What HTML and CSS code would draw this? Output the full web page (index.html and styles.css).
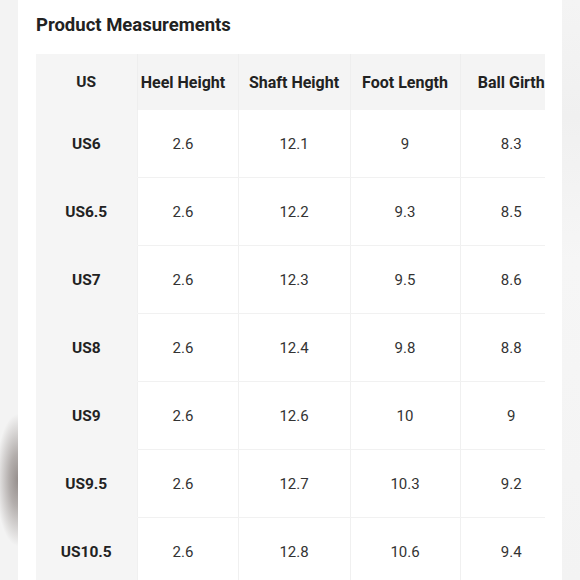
FILE: index.html
```html
<!DOCTYPE html>
<html lang="en">
<head>
<meta charset="utf-8">
<title>Product Measurements</title>
<link rel="stylesheet" href="styles.css">
</head>
<body>
<div class="page">
  <div class="strip strip-left"></div>
  <main class="main">
    <h2 class="title">Product Measurements</h2>
    <div class="table-wrap">
      <table class="sizes">
        <colgroup>
          <col class="c-us"><col class="c-heel"><col class="c-shaft"><col class="c-foot"><col class="c-ball">
        </colgroup>
        <thead>
          <tr><th class="first">US</th><th class="heel">Heel Height</th><th>Shaft Height</th><th>Foot Length</th><th>Ball Girth</th></tr>
        </thead>
        <tbody>
          <tr><th class="first">US6</th><td class="heel">2.6</td><td>12.1</td><td>9</td><td>8.3</td></tr>
          <tr><th class="first">US6.5</th><td class="heel">2.6</td><td>12.2</td><td>9.3</td><td>8.5</td></tr>
          <tr><th class="first">US7</th><td class="heel">2.6</td><td>12.3</td><td>9.5</td><td>8.6</td></tr>
          <tr><th class="first">US8</th><td class="heel">2.6</td><td>12.4</td><td>9.8</td><td>8.8</td></tr>
          <tr><th class="first">US9</th><td class="heel">2.6</td><td>12.6</td><td>10</td><td>9</td></tr>
          <tr><th class="first">US9.5</th><td class="heel">2.6</td><td>12.7</td><td>10.3</td><td>9.2</td></tr>
          <tr><th class="first">US10.5</th><td class="heel">2.6</td><td>12.8</td><td>10.6</td><td>9.4</td></tr>
        </tbody>
      </table>
    </div>
  </main>
  <div class="strip strip-right"></div>
</div>
</body>
</html>
```

FILE: styles.css
```css
html, body {
  margin: 0;
  padding: 0;
  background: #ffffff;
}

body {
  font-family: Roboto, "Liberation Sans", Arial, sans-serif;
  color: #222222;
  overflow: hidden;
}

.page {
  display: flex;
  width: 580px;
  height: 580px;
  overflow: hidden;
}

.strip {
  flex: 0 0 18px;
  height: 580px;
  background-color: #f3f3f3;
}

.strip-left {
  background-image:
    radial-gradient(ellipse 22px 66px at 18px 480px, rgba(150,143,141,1) 0%, rgba(168,162,160,0.85) 40%, rgba(243,243,243,0) 100%);
}

.strip-right {
  background-image: linear-gradient(to bottom, #f4f4f4 0%, #f0f0f0 20%, #f6f6f6 45%, #f3f3f3 100%);
}

.main {
  flex: 1 1 auto;
  padding: 0 17px 0 18px;
  min-width: 0;
}

.title {
  margin: 13px 0 17px;
  font-size: 18.5px;
  line-height: 24px;
  font-weight: 700;
  color: #222222;
}

.table-wrap {
  width: 509px;
  overflow: hidden;
}

.sizes {
  border-collapse: collapse;
  table-layout: fixed;
  width: 526px;
  font-size: 15px;
}

.c-us { width: 101px; }
.c-heel { width: 101px; }
.c-shaft { width: 112px; }
.c-foot { width: 110px; }
.c-ball { width: 102px; }

.sizes th,
.sizes td {
  text-align: center;
  padding: 0;
  white-space: nowrap;
}

.sizes .heel {
  padding-right: 9px;
}

.sizes thead th {
  height: 56px;
  background: #f4f4f4;
  font-weight: 700;
  font-size: 16px;
  color: #222222;
  border-left: 1px solid #eeeeee;
}

.sizes thead th:first-child {
  border-left: none;
}

.sizes tbody td,
.sizes tbody th {
  height: 67px;
  border-bottom: 1px solid #f1f1f1;
}

.sizes tbody td {
  color: #333333;
  font-weight: 400;
  border-left: 1px solid #f0f0f0;
}

.sizes .first {
  position: relative;
  z-index: 1;
  background: #f5f5f5;
  font-weight: 700;
  font-size: 15.5px;
  color: #222222;
  box-shadow: 8px 0 12px -6px rgba(0, 0, 0, 0.07);
  border-bottom-color: #f5f5f5;
}
```
